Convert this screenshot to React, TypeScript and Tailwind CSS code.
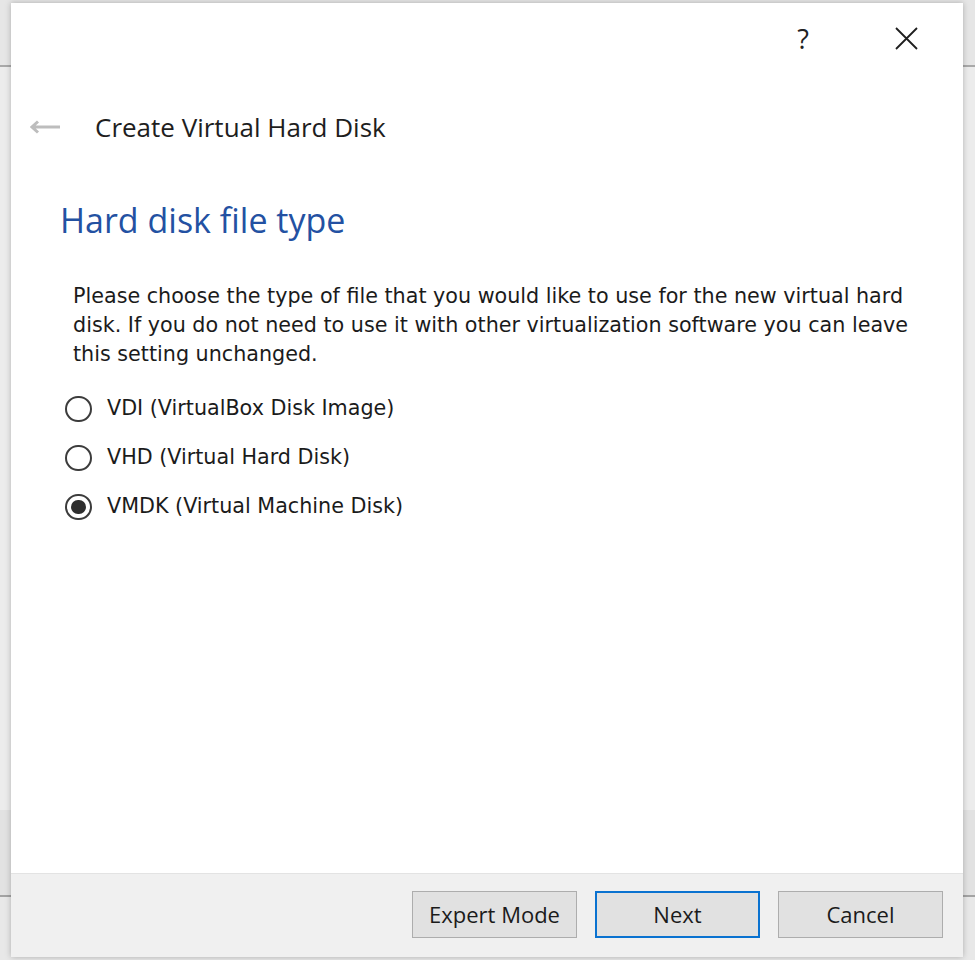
import React from "react";

const segoe = { fontFamily: '"Open Sans", "Noto Sans", "Liberation Sans", sans-serif' };
const tahoma = { fontFamily: '"DejaVu Sans", "Liberation Sans", sans-serif' };

function Radio({ checked, label }: { checked?: boolean; label: string }) {
  return (
    <label className="flex items-center h-[49px]">
      <span className="w-[27px] h-[26px] rounded-full border-2 border-[#3c3c3c] bg-white flex items-center justify-center ml-[65px]">
        {checked && <span className="w-[15px] h-[14px] rounded-full bg-[#2e2e2e]" />}
      </span>
      <span className="ml-[15px] text-[20.7px] text-[#1b1b1b]" style={tahoma}>
        {label}
      </span>
    </label>
  );
}

function Button({ children, focused }: { children: React.ReactNode; focused?: boolean }) {
  return (
    <button
      className={
        "w-[165px] h-[47px] bg-[#e1e1e1] text-[22px] text-[#1b1b1b] flex items-center justify-center " +
        (focused ? "border-2 border-[#0a72d0]" : "border border-[#adadad]")
      }
      style={segoe}
    >
      {children}
    </button>
  );
}

export default function App() {
  return (
    <div className="relative w-[975px] h-[960px] overflow-hidden bg-[#ebebeb]">
      {/* window behind the dialog */}
      <div className="flex flex-col h-full">
        <div className="h-[65px] bg-[#e6e6e6]" />
        <div className="h-[2px] bg-[#a9a9a9]" />
        <div className="h-[743px] bg-[#ececec]" />
        <div className="h-[85px] bg-[#e2e2e2]" />
        <div className="h-[2px] bg-[#a3a3a3]" />
        <div className="flex-1 bg-[#e8e8e8]" />
      </div>

      {/* dialog */}
      <div className="absolute left-[11px] top-[3px] w-[952px] h-[954px] bg-white flex flex-col shadow-[0_0_6px_rgba(0,0,0,0.25)]">
        <div className="h-[98px] flex items-start justify-end">
          <span className="mt-[22px] mr-[86px] text-[27px] text-[#222] leading-none" style={segoe}>
            ?
          </span>
          <svg className="mt-[24px] mr-[45px]" width="23" height="23" viewBox="0 0 23 23">
            <path d="M1 1 L22 22 M22 1 L1 22" stroke="#1e1e1e" strokeWidth="1.8" fill="none" />
          </svg>
        </div>

        <div className="flex items-center h-[52px]">
          <svg className="ml-[19px]" width="31" height="14" viewBox="0 0 31 14">
            <path d="M30 7 H3 M8 1.5 L2 7 L8 12.5" stroke="#bdbdbd" strokeWidth="3" fill="none" />
          </svg>
          <span className="ml-[34px] text-[26px] text-[#1e1e1e]" style={segoe}>
            Create Virtual Hard Disk
          </span>
        </div>

        <h1 className="ml-[49px] mt-[45px] text-[34px] text-[#2351a2] leading-[44px]" style={segoe}>
          Hard disk file type
        </h1>

        <p className="ml-[62px] mt-[40px] w-[842px] text-[20.7px] leading-[29px] text-[#1b1b1b]" style={tahoma}>
          Please choose the type of file that you would like to use for the new virtual hard disk. If you do not
          need to use it with other virtualization software you can leave this setting unchanged.
        </p>

        <div className="mt-[15px] flex flex-col -ml-[11px]">
          <Radio label="VDI (VirtualBox Disk Image)" />
          <Radio label="VHD (Virtual Hard Disk)" />
          <Radio checked label="VMDK (Virtual Machine Disk)" />
        </div>

        <div className="flex-1" />

        <div className="h-[84px] bg-[#f0f0f0] border-t border-[#e3e3e3] flex items-start justify-end gap-[18px] pt-[17px] pr-[20px]">
          <Button>Expert Mode</Button>
          <Button focused>Next</Button>
          <Button>Cancel</Button>
        </div>
      </div>
    </div>
  );
}
